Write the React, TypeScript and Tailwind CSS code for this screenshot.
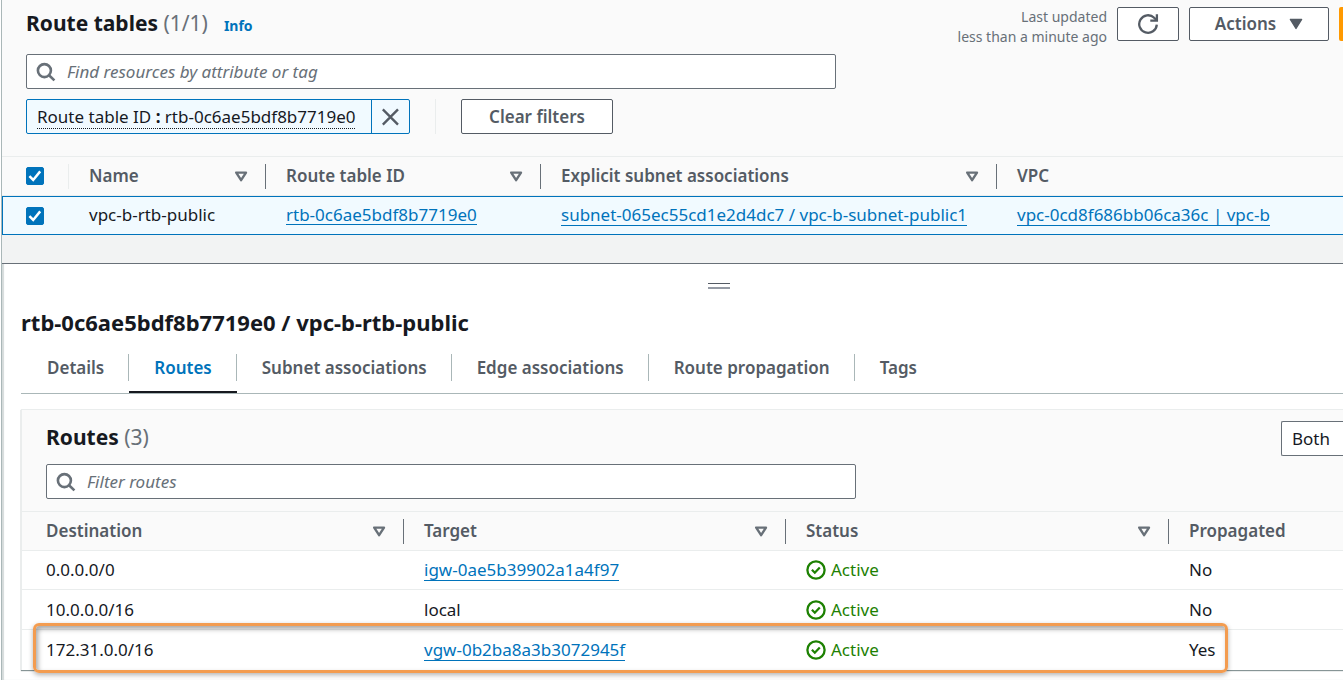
import React, { useState } from 'react'

interface RouteRow {
  destination: string
  target: string
  isLink: boolean
  status: string
  propagated: string
}

const routes: RouteRow[] = [
  { destination: '0.0.0.0/0', target: 'igw-0ae5b39902a1a4f97', isLink: true, status: 'Active', propagated: 'No' },
  { destination: '10.0.0.0/16', target: 'local', isLink: false, status: 'Active', propagated: 'No' },
  { destination: '172.31.0.0/16', target: 'vgw-0b2ba8a3b3072945f', isLink: true, status: 'Active', propagated: 'Yes' }
]

const tabs = ['Details', 'Routes', 'Subnet associations', 'Edge associations', 'Route propagation', 'Tags']

const SearchIcon = () => (
  <svg className="w-5 h-5 shrink-0" viewBox="0 0 20 20" fill="none" stroke="#687078" strokeWidth="2.6">
    <circle cx="8.4" cy="8.6" r="6.5" />
    <path d="M13 13.2l5.4 5.2" />
  </svg>
)

const SortIcon = () => (
  <svg className="w-[14px] h-3 -mr-px" viewBox="0 0 14 12" fill="none" stroke="#687078" strokeWidth="2.4" strokeLinejoin="round">
    <path d="M2.2 2.6h9.8L7.1 10.2z" />
  </svg>
)

const StatusIcon = () => (
  <svg className="w-5 h-5" viewBox="0 0 20 20" fill="none" stroke="#1d8102" strokeWidth="2.3">
    <circle cx="10" cy="10" r="8.6" />
    <path d="M5.9 9.8l2.9 2.9 5-5.2" />
  </svg>
)

const Checkbox = ({ label }: { label: string }) => {
  const [checked, setChecked] = useState(true)
  return (
    <label className="grid w-[18px] h-[18px] place-items-center">
      <input
        type="checkbox"
        aria-label={label}
        checked={checked}
        onChange={(e) => setChecked(e.target.checked)}
        className="col-start-1 row-start-1 w-[18px] h-[18px] appearance-none rounded-xs border border-[#687078] bg-white checked:border-[#0073bb] checked:bg-[#0073bb]"
      />
      {checked && (
        <svg className="col-start-1 row-start-1 w-[18px] h-[18px] pointer-events-none" viewBox="0 0 18 18" fill="none" stroke="#fff" strokeWidth="2.5">
          <path d="M3.4 9.2l3.8 3.8 7-8.6" />
        </svg>
      )}
    </label>
  )
}

const SearchBox = ({ placeholder }: { placeholder: string }) => (
  <label className="flex items-center gap-[11px] w-[810px] max-w-full h-[35px] px-[9px] bg-white border border-[#687078] rounded-xs">
    <SearchIcon />
    <input
      type="search"
      aria-label={placeholder}
      placeholder={placeholder}
      className="flex-1 min-w-0 outline-none placeholder:italic placeholder:text-[#687078]"
    />
  </label>
)

interface HeaderCellProps {
  children: React.ReactNode
  className?: string
  last?: boolean
}

const HeaderCell = ({ children, className = 'pl-5', last }: HeaderCellProps) => (
  <th scope="col" className="p-0 h-10 border-y border-[#eaeded] bg-[#fafafa] text-left font-semibold text-[#545b64]">
    <div className={`flex items-center justify-between h-[25px] pr-[18px] ${className} ${last ? '' : 'border-r border-[#687078]'}`}>
      <span className="whitespace-nowrap">{children}</span>
      {!last && <SortIcon />}
    </div>
  </th>
)

const Link = ({ children, className = 'leading-[21px]' }: { children: React.ReactNode; className?: string }) => (
  <a href="#" className={`inline-block border-b border-[#0073bb] text-[#0073bb] ${className}`}>
    {children}
  </a>
)

const App: React.FC = () => {
  const [activeTab, setActiveTab] = useState('Routes')
  const selectedCell = 'pt-0 pb-px pl-5 border-y border-[#0073bb]'

  return (
    <div className="min-h-screen overflow-hidden bg-white pl-px font-['Noto_Sans','Open_Sans',sans-serif] text-[17px] leading-6 text-[#16191f]">
      <div className="min-h-screen border-l border-[#aab7b8] shadow-[inset_2px_0_1px_#d5dbdb]">
        {/* Route tables */}
        <section className="bg-[#fafafa]">
          <header className="flex flex-col px-6 pt-[7px] pb-[22px]">
            <div className="flex items-start justify-between -mr-6">
              <h1 className="text-[21px] leading-8 font-bold">
                Route tables <span className="font-normal text-[#687078]">(1/1)</span>
                <a href="#" className="ml-4 text-[14px] font-bold text-[#0073bb]">Info</a>
              </h1>
              <div className="flex items-start gap-[10px]">
                <p className="text-right text-[14px] leading-5 text-[#687078]">
                  Last updated
                  <br />
                  less than a minute ago
                </p>
                <button aria-label="Refresh" className="flex items-center justify-center w-[62px] h-[34px] bg-white border border-[#545b64] rounded-xs">
                  <svg className="w-[22px] h-[22px]" viewBox="0 0 22 22" fill="none" stroke="#545b64" strokeWidth="2.3">
                    <path d="M19.8 11.6a8.8 8.8 0 1 1-2.6-6.8L19.6 7" />
                    <path d="M19.9 1.2v6.4h-6.6" />
                  </svg>
                </button>
                <button className="flex items-center justify-center gap-[13px] w-[140px] h-[34px] bg-white border border-[#545b64] rounded-xs font-semibold text-[#545b64]">
                  Actions
                  <svg className="w-[14px] h-3" viewBox="0 0 14 12" fill="#545b64" stroke="#545b64" strokeWidth="1.4" strokeLinejoin="round">
                    <path d="M1.4 1.4h11.2L7 10.4z" />
                  </svg>
                </button>
                <button aria-label="Create route table" className="w-1 h-[34px] bg-[#ff9900] rounded-l-xs" />
              </div>
            </div>

            <div className="mt-[7px]">
              <SearchBox placeholder="Find resources by attribute or tag" />
            </div>

            <div className="flex items-center mt-[10px]">
              <div className="flex h-[35px] bg-[#f1faff] border border-[#0073bb] rounded-xs">
                <button className="w-[344px] px-[10px] text-left whitespace-nowrap underline decoration-dotted decoration-1 underline-offset-[5px]">
                  Route table ID <b>:</b> rtb-0c6ae5bdf8b7719e0
                </button>
                <button aria-label="Remove filter" className="flex items-center justify-center w-[38px] border-l border-[#0073bb]">
                  <svg className="w-[18px] h-[18px]" viewBox="0 0 18 18" fill="none" stroke="#545b64" strokeWidth="2.4">
                    <path d="M.8 1.4l15.2 15.2M16 1.4L.8 16.6" />
                  </svg>
                </button>
              </div>
              <div className="mx-[25px] w-px h-[35px] bg-[#eaeded]" />
              <button className="w-[152px] h-[35px] bg-white border border-[#545b64] rounded-xs font-semibold text-[#545b64]">
                Clear filters
              </button>
            </div>
          </header>

          <table className="w-full table-fixed border-separate border-spacing-0">
            <colgroup>
              <col className="w-[67px]" />
              <col className="w-[197px]" />
              <col className="w-[275px]" />
              <col className="w-[456px]" />
              <col />
            </colgroup>
            <thead>
              <tr>
                <th scope="col" className="p-0 h-10 border-y border-[#eaeded]">
                  <div className="flex items-center h-[25px] pl-6 border-r border-[#eaeded]">
                    <Checkbox label="Select all route tables" />
                  </div>
                </th>
                <HeaderCell>Name</HeaderCell>
                <HeaderCell>Route table ID</HeaderCell>
                <HeaderCell>Explicit subnet associations</HeaderCell>
                <HeaderCell last>VPC</HeaderCell>
              </tr>
            </thead>
            <tbody>
              <tr className="h-[39px] bg-[#f1faff] whitespace-nowrap">
                <td className="p-0 pl-[23px] border-y border-l border-[#0073bb]">
                  <Checkbox label="Select vpc-b-rtb-public" />
                </td>
                <td className={selectedCell}>vpc-b-rtb-public</td>
                <td className={selectedCell}><Link className="leading-[18px]">rtb-0c6ae5bdf8b7719e0</Link></td>
                <td className={selectedCell}><Link>subnet-065ec55cd1e2d4dc7 / vpc-b-subnet-public1</Link></td>
                <td className={selectedCell}><Link>vpc-0cd8f686bb06ca36c | vpc-b</Link></td>
              </tr>
            </tbody>
          </table>
          <div className="h-7 bg-[#f2f3f3]" />
        </section>

        {/* Split panel */}
        <section className="pl-[19px] border-t border-[#687078]">
          <button aria-label="Resize panel" className="block ml-[52%] mt-[19px] w-[22px] h-[6px] border-t border-b-2 border-t-[#545b64] border-b-[#959ba5]" />
          <h2 className="mt-[19px] text-[22px] leading-7 font-bold">rtb-0c6ae5bdf8b7719e0 / vpc-b-rtb-public</h2>

          <div role="tablist" className="flex mt-2 pl-px h-[50px] border-b border-[#aab7b8]">
            {tabs.map((tab, index) => (
              <button
                key={tab}
                role="tab"
                aria-selected={tab === activeTab}
                onClick={() => setActiveTab(tab)}
                className={`flex items-center border-b-2 font-semibold whitespace-nowrap ${
                  tab === activeTab ? 'border-[#16191f] text-[#0073bb]' : 'border-transparent text-[#545b64]'
                }`}
              >
                <span className={`flex items-center h-[27px] pl-[25px] pr-6 ${index < tabs.length - 1 ? 'border-r border-[#aab7b8]' : ''}`}>
                  {tab}
                </span>
              </button>
            ))}
          </div>

          <div className="relative mt-[15px] border-l border-t border-[#eaeded] bg-[#fafafa] shadow-[0_1px_1px_#879596]">
            <div className="pl-6 pt-[11px] pb-3">
              <div className="flex items-start justify-between">
                <h3 className="text-[21px] leading-8 font-bold">
                  Routes <span className="font-normal text-[#687078]">(3)</span>
                </h3>
                <select aria-label="Route type" className="w-[62px] h-[35px] pl-[10px] appearance-none bg-white border border-r-0 border-[#687078] rounded-l-xs">
                  <option>Both</option>
                </select>
              </div>
              <div className="mt-2">
                <SearchBox placeholder="Filter routes" />
              </div>
            </div>

            <table className="w-full table-fixed border-separate border-spacing-0 bg-white">
              <colgroup>
                <col className="w-[382px]" />
                <col className="w-[382px]" />
                <col className="w-[383px]" />
                <col />
              </colgroup>
              <thead>
                <tr>
                  <HeaderCell className="pl-6">Destination</HeaderCell>
                  <HeaderCell>Target</HeaderCell>
                  <HeaderCell>Status</HeaderCell>
                  <HeaderCell last>Propagated</HeaderCell>
                </tr>
              </thead>
              <tbody>
                {routes.map((route) => (
                  <tr key={route.destination} className="h-10 first:h-[39px] *:border-b *:border-[#eaeded] *:py-0 last:*:border-transparent">
                    <td className="pl-6">{route.destination}</td>
                    <td className="pl-5">{route.isLink ? <Link>{route.target}</Link> : route.target}</td>
                    <td className="pl-5">
                      <span className="flex items-center gap-[5px] text-[#1d8102]">
                        <StatusIcon />
                        {route.status}
                      </span>
                    </td>
                    <td className="pl-5">{route.propagated}</td>
                  </tr>
                ))}
              </tbody>
            </table>

            {/* Highlight around the propagated route */}
            <div className="absolute left-[11px] right-[115px] -bottom-[3px] h-[50px] border-3 border-[#f39c50] rounded-md shadow-[0_2px_5px_rgba(0,0,0,0.3),inset_2px_3px_5px_rgba(0,0,0,0.35)] pointer-events-none" />
          </div>
        </section>
      </div>
    </div>
  )
}

export default App
